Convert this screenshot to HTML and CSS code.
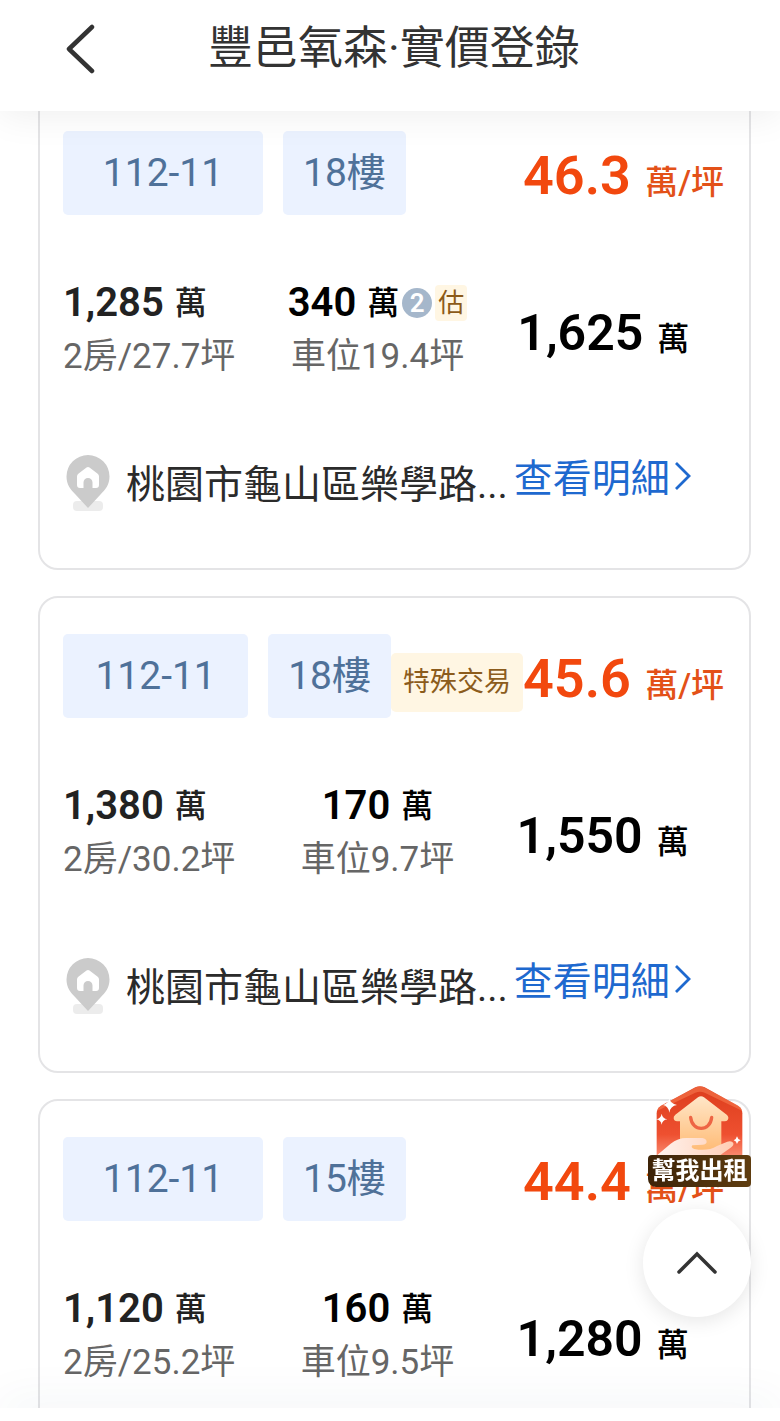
FILE: index.html
```html
<!DOCTYPE html>
<html lang="zh-Hant">
<head>
<meta charset="utf-8">
<meta name="viewport" content="width=device-width, initial-scale=1">
<title>豐邑氧森·實價登錄</title>
<link rel="stylesheet" href="styles.css">
</head>
<body>
<svg class="defs" aria-hidden="true">
  <symbol id="pin" viewBox="0 0 44 56">
    <rect x="7" y="46" width="30" height="10" rx="4" fill="#ececec"/>
    <path d="M22 0a21.500 21.500 0 0 1 21.500 21.500c0 8-4 13-9 18L22 53 9.500 39.500c-5-5-9-10-9-18A21.500 21.500 0 0 1 22 0z" fill="#cbcbcb"/>
    <path d="M20.500 12.500q1.500-1.200 3 0l8.500 6.500q1 1 1 2.500V30q0 3-3 3h-3.500v-5.500a4.500 4.500 0 0 0-9 0V33H14q-3 0-3-3v-8.500q0-1.500 1-2.500z" fill="#fff"/>
  </symbol>
  <symbol id="more" viewBox="0 0 18 30">
    <path d="M2 2l13 13L2 28" fill="none" stroke="currentColor" stroke-width="2.800"/>
  </symbol>
</svg>
<div class="screen">
  <header class="topbar">
    <button class="back" type="button" aria-label="返回">
      <svg viewBox="0 0 30 50" width="30" height="50"><path d="M27 3L4 25l23 22" fill="none" stroke="#333" stroke-width="4.500" stroke-linecap="round" stroke-linejoin="round"/></svg>
    </button>
    <h1 class="title">豐邑氧森·實價登錄</h1>
  </header>

  <main class="scroll">
    <div class="list">
      <article class="card">
        <div class="head">
          <div class="tags"><span class="tag date">112-11</span><span class="tag floor">18樓</span></div>
          <div class="unit-price"><strong>46.3</strong><span>萬/坪</span></div>
        </div>
        <div class="figures">
          <div class="figure"><div class="amount dark"><strong>1,285</strong><span>萬</span></div><div class="note">2房/27.7坪</div></div>
          <div class="figure parking"><div class="amount"><strong>340</strong><span>萬</span><i class="count">2</i><i class="estimate">估</i></div><div class="note">車位19.4坪</div></div>
          <div class="total"><strong>1,625</strong><span>萬</span></div>
        </div>
        <div class="foot">
          <svg class="pin"><use href="#pin"/></svg>
          <span class="address">桃園市龜山區樂學路...</span>
          <a class="detail" href="#">查看明細<svg class="more"><use href="#more"/></svg></a>
        </div>
      </article>

      <article class="card">
        <div class="head">
          <div class="tags"><span class="tag date">112-11</span><span class="tag floor">18樓</span><span class="special">特殊交易</span></div>
          <div class="unit-price"><strong>45.6</strong><span>萬/坪</span></div>
        </div>
        <div class="figures">
          <div class="figure"><div class="amount dark"><strong>1,380</strong><span>萬</span></div><div class="note">2房/30.2坪</div></div>
          <div class="figure parking"><div class="amount"><strong>170</strong><span>萬</span></div><div class="note">車位9.7坪</div></div>
          <div class="total"><strong>1,550</strong><span>萬</span></div>
        </div>
        <div class="foot">
          <svg class="pin"><use href="#pin"/></svg>
          <span class="address">桃園市龜山區樂學路...</span>
          <a class="detail" href="#">查看明細<svg class="more"><use href="#more"/></svg></a>
        </div>
      </article>

      <article class="card">
        <div class="head">
          <div class="tags"><span class="tag date">112-11</span><span class="tag floor">15樓</span></div>
          <div class="unit-price"><strong>44.4</strong><span>萬/坪</span></div>
        </div>
        <div class="figures">
          <div class="figure"><div class="amount dark"><strong>1,120</strong><span>萬</span></div><div class="note">2房/25.2坪</div></div>
          <div class="figure parking"><div class="amount"><strong>160</strong><span>萬</span></div><div class="note">車位9.5坪</div></div>
          <div class="total"><strong>1,280</strong><span>萬</span></div>
        </div>
        <div class="foot"></div>
      </article>
    </div>
  </main>

  <div class="bottom"></div>

  <div class="floating">
    <a class="rent" href="#">
      <svg class="rent-art" viewBox="84 46 309 207" aria-hidden="true">
        <defs>
          <linearGradient id="red" x1="0" y1="0" x2="0" y2="1"><stop offset="0" stop-color="#dc3d1c"/><stop offset=".7" stop-color="#ee5030"/><stop offset="1" stop-color="#f9876c"/></linearGradient>
          <linearGradient id="house" x1="0" y1="0" x2="0" y2="1"><stop offset="0" stop-color="#ffe6c8"/><stop offset="1" stop-color="#ffb870"/></linearGradient>
          <linearGradient id="hand" x1="0" y1="0" x2="1" y2="0"><stop offset="0" stop-color="#fff3ee"/><stop offset="1" stop-color="#ffcdb4"/></linearGradient>
        </defs>
        <path d="M110 253V128q0-15 13-23L226 50q14-6 28 0l100 55q13 8 13 23v125z" fill="url(#red)"/>
        <path d="M112 120q4-10 14-16L228 50q12-5 24 0l100 54q11 6 14 16l-112-54q-14-6-28 0z" fill="#f77a4f" opacity=".6"/>
        <path d="M234 80q9-7 18 0l69 53q7 7 2 15-3 4-9 4h-10v101H180V152h-9q-9 0-10-9-1-6 5-11z" fill="url(#house)"/>
        <path d="M212 140c4 44 59 44 63 0" fill="none" stroke="#ee6544" stroke-width="10" stroke-linecap="round"/>
        <path d="M112 253l40-34q22-18 50-17h45q12 2 13 11 0 8-13 9l-30 2q-6 7 6 11 40 8 68-9l31-13q13-4 18 4 2 8-8 14l-31 22z" fill="url(#hand)"/>
        <path d="M148 83q3 16 23 20-20 3-23 23-3-20-19-23 16-4 19-20zM125 129q2 14 17 17-15 2-17 16-2-14-17-16 15-3 17-17zM351 197q2 9 11 12-9 2-11 11-2-9-10-11 8-3 10-12z" fill="#fff"/>
      </svg>
      <span class="rent-label">幫我出租</span>
    </a>
    <button class="to-top" type="button" aria-label="回到頂部">
      <svg viewBox="0 0 40 24" width="40" height="24"><path d="M2 21L20 3l18 18" fill="none" stroke="#333" stroke-width="3.500" stroke-linecap="round"/></svg>
    </button>
  </div>
</div>
</body>
</html>
```
FILE: styles.css
```css
* { box-sizing: border-box; }

body {
  margin: 0;
  background: #fff;
  color: #2b2b2b;
  font-family: Roboto, "Noto Sans CJK TC", sans-serif;
}

button { border: 0; padding: 0; background: none; cursor: pointer; }
a { text-decoration: none; }
i { font-style: normal; }
strong { font-weight: 600; }
.defs { display: none; }

.screen {
  display: flex;
  flex-direction: column;
  height: 100vh;
  overflow: hidden;
}

.topbar {
  position: relative;
  z-index: 1;
  display: grid;
  grid-template-columns: 95px 1fr 87px;
  align-items: center;
  flex: none;
  height: 111px;
  padding-bottom: 14px;
  background: #fff;
  box-shadow: 0 4px 36px rgba(0, 0, 0, .07);
}
.back { display: flex; justify-content: flex-end; }
.title {
  margin: 0;
  color: #333;
  font-size: 45px;
  font-weight: 400;
  line-height: 64px;
  text-align: center;
}

.scroll { flex: 1; min-height: 0; overflow: hidden; }
.list {
  display: flex;
  flex-direction: column;
  gap: 26px;
  margin-top: -18px;
  padding: 0 29px 0 38px;
}

.card {
  display: flex;
  flex-direction: column;
  height: 477px;
  padding: 36px 25px 36px 23px;
  border: 2px solid #e4e4e6;
  border-radius: 20px;
}

.head { display: flex; height: 84px; }
.tags { display: flex; flex: 1; min-width: 0; align-items: center; }
.tag {
  flex: none;
  padding: 0 20px;
  border-radius: 5px;
  background: #ebf2ff;
  color: #4f7199;
  font-size: 39px;
  line-height: 84px;
  text-align: center;
}
.date { flex: 0 1 200px; margin-right: 20px; }
.special {
  flex: none;
  margin-top: 12px;
  padding: 0 12px;
  border-radius: 5px;
  background: #fff6e3;
  color: #8c5c1c;
  font-size: 27px;
  line-height: 59px;
}
.unit-price {
  display: flex;
  align-items: baseline;
  justify-content: space-between;
  width: 201px;
  padding-top: 3px;
  color: #f2480e;
  line-height: 84px;
}
.unit-price strong { font-size: 54px; }
.unit-price span { color: #e35118; font-size: 33px; font-weight: 500; }

.figures {
  display: grid;
  grid-template-columns: 225fr 178fr 257fr;
  margin-top: 60px;
}
.parking { display: flex; flex-direction: column; align-items: center; }
.amount {
  display: flex;
  align-items: center;
  color: #000;
  line-height: 56px;
  white-space: nowrap;
}
.amount strong { font-size: 40px; }
.amount span { margin-left: 11px; font-size: 32px; font-weight: 500; }
.dark { color: #222; }
.count {
  width: 30px;
  margin-left: 3px;
  border-radius: 15px;
  background: #a5b7cb;
  color: #fff;
  font-size: 26px;
  font-weight: 600;
  line-height: 30px;
  text-align: center;
}
.estimate {
  margin-left: 3px;
  padding: 0 3px;
  border-radius: 4px;
  background: #fff6e3;
  color: #8c5a18;
  font-size: 26px;
  line-height: 36px;
}
.note { color: #666; font-size: 35px; line-height: 52px; white-space: nowrap; }
.total {
  display: flex;
  align-items: baseline;
  padding: 8px 0 0 50px;
  color: #000;
  line-height: 100px;
}
.total strong { font-size: 50px; }
.total span { margin-left: 14px; font-size: 32px; font-weight: 500; }

.foot { display: flex; align-items: center; margin-top: 62px; }
.pin { flex: none; width: 44px; height: 56px; margin-left: 3px; }
.address {
  margin: 4px 0 0 16px;
  color: #2b2b2b;
  font-size: 39px;
  line-height: 56px;
  white-space: nowrap;
}
.detail {
  display: flex;
  align-items: center;
  margin: 0 0 8px 6px;
  color: #1e69cf;
  font-size: 39px;
  line-height: 56px;
  white-space: nowrap;
}
.more { width: 18px; height: 30px; margin: 0 0 6px 4px; }

.bottom {
  position: relative;
  flex: none;
  height: 13px;
  background: #fff;
  box-shadow: 0 0 48px rgba(40, 70, 110, .12);
}

.floating {
  position: fixed;
  right: 29px;
  bottom: 104px;
  z-index: 2;
  display: flex;
  flex-direction: column;
  align-items: flex-end;
  gap: 22px;
}
.rent { display: block; width: 103px; }
.rent-art { display: block; width: 103px; height: 69px; }
.rent-label {
  display: block;
  border-radius: 4px 4px 4px 8px;
  background: linear-gradient(90deg, #3d2308, #5f3d10);
  color: #fff;
  font-size: 24px;
  font-weight: 700;
  line-height: 32px;
  text-align: center;
}
.to-top {
  display: flex;
  align-items: center;
  justify-content: center;
  width: 108px;
  height: 108px;
  border-radius: 50%;
  background: #fff;
  box-shadow: 0 4px 20px rgba(0, 0, 0, .1);
}
```
